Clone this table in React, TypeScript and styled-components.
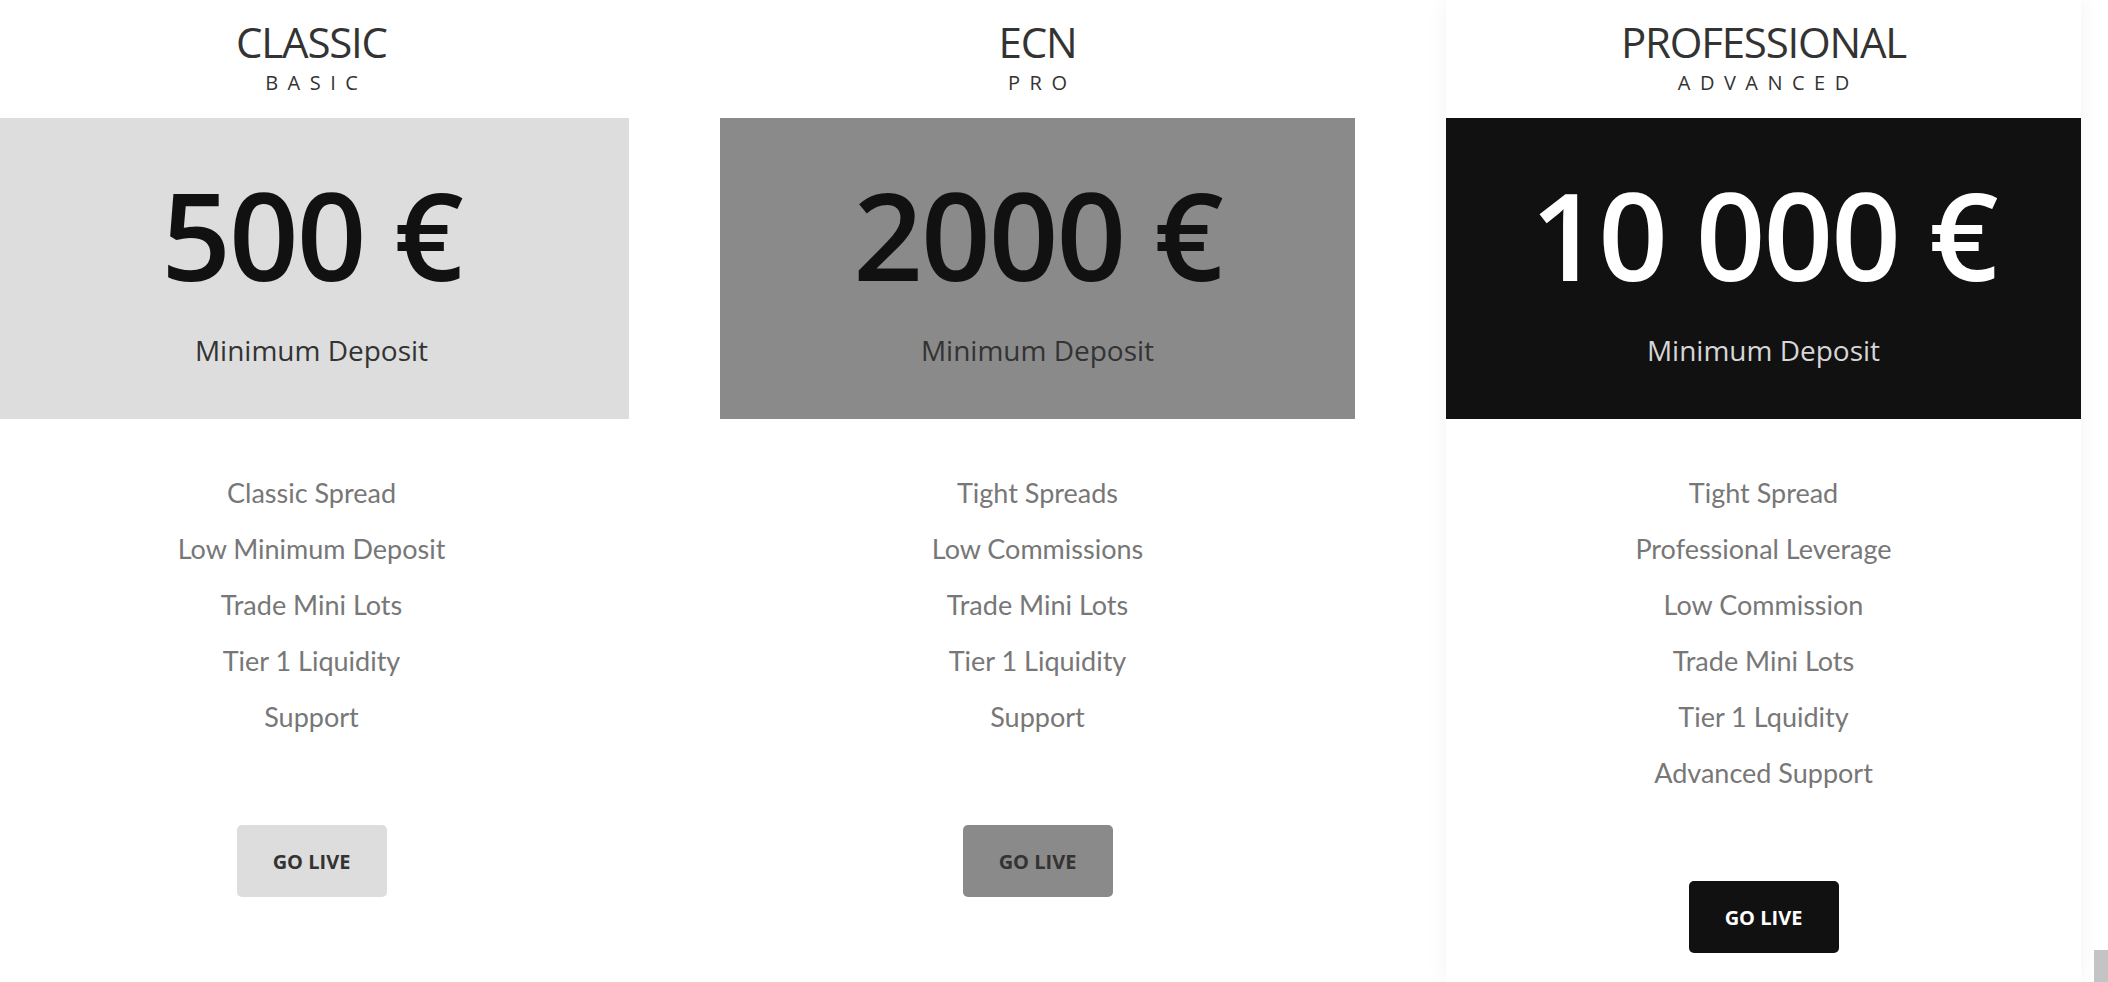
import React from 'react';
import styled, {createGlobalStyle} from 'styled-components';

const GlobalStyle = createGlobalStyle`
  html, body {
    margin: 0;
    padding: 0;
    background: #ffffff;
  }
  body {
    font-family: 'Open Sans', 'Liberation Sans', sans-serif;
    overflow: hidden;
  }
`;

type Tone = 'light' | 'mid' | 'dark';

const palette: Record<Tone, {bg: string; price: string; label: string; btnText: string}> = {
  light: {bg: '#dddddd', price: '#111111', label: '#333333', btnText: '#333333'},
  mid: {bg: '#8a8a8a', price: '#111111', label: '#333333', btnText: '#333333'},
  dark: {bg: '#111111', price: '#ffffff', label: '#d6d6d6', btnText: '#ffffff'},
};

const Page = styled.div`
  position: relative;
  height: 982px;
  margin-left: -6px;
  display: grid;
  grid-template-columns: repeat(3, 635px);
  column-gap: 91px;
  align-items: stretch;
`;

const Card = styled.section<{$featured?: boolean}>`
  display: flex;
  flex-direction: column;
  align-items: center;
  background: #ffffff;
  box-shadow: ${p => (p.$featured ? '0 0 22px rgba(0, 0, 0, 0.05)' : 'none')};
`;

const Header = styled.header`
  height: 118px;
  display: flex;
  flex-direction: column;
  align-items: center;
  padding-top: 16px;
  box-sizing: border-box;
`;

const Title = styled.h2`
  margin: 0;
  font-family: 'Open Sans', 'Liberation Sans', sans-serif;
  font-weight: 500;
  font-size: 42px;
  line-height: 52px;
  letter-spacing: -1.2px;
  color: #333333;
`;

const Subtitle = styled.div`
  margin-top: 2px;
  font-family: 'Open Sans', 'Liberation Sans', sans-serif;
  font-size: 20px;
  line-height: 26px;
  letter-spacing: 9.5px;
  padding-left: 9.5px;
  color: #333333;
`;

const PriceBox = styled.div<{$tone: Tone}>`
  align-self: stretch;
  height: 301px;
  background: ${p => palette[p.$tone].bg};
  display: flex;
  flex-direction: column;
  align-items: center;
  padding-top: 28px;
  box-sizing: border-box;
`;

const Price = styled.div<{$tone: Tone}>`
  font-family: 'Open Sans', 'Liberation Sans', sans-serif;
  font-weight: 600;
  font-size: 122px;
  line-height: 176px;
  letter-spacing: -2px;
  color: ${p => palette[p.$tone].price};
`;

const PriceLabel = styled.div<{$tone: Tone}>`
  margin-top: 8px;
  font-family: 'Open Sans', 'Liberation Sans', sans-serif;
  font-size: 28px;
  line-height: 40px;
  color: ${p => palette[p.$tone].label};
`;

const Features = styled.ul`
  list-style: none;
  margin: 46px 0 0;
  padding: 0;
  text-align: center;
`;

const Feature = styled.li`
  font-family: Lato, 'Open Sans', sans-serif;
  font-size: 27px;
  line-height: 56px;
  color: #777777;
`;

const GoLive = styled.button<{$tone: Tone}>`
  margin-top: 80px;
  width: 150px;
  height: 72px;
  border: none;
  border-radius: 5px;
  background: ${p => palette[p.$tone].bg};
  color: ${p => palette[p.$tone].btnText};
  font-family: 'Open Sans', 'Liberation Sans', sans-serif;
  font-weight: 700;
  font-size: 20px;
  cursor: pointer;
`;

const ScrollThumb = styled.div`
  position: absolute;
  right: 0;
  bottom: 0;
  width: 14px;
  height: 32px;
  background: #c4c4c4;
`;

const plans: {title: string; tier: string; price: string; tone: Tone; features: string[]}[] = [
  {
    title: 'CLASSIC',
    tier: 'BASIC',
    price: '500 €',
    tone: 'light',
    features: ['Classic Spread', 'Low Minimum Deposit', 'Trade Mini Lots', 'Tier 1 Liquidity', 'Support'],
  },
  {
    title: 'ECN',
    tier: 'PRO',
    price: '2000 €',
    tone: 'mid',
    features: ['Tight Spreads', 'Low Commissions', 'Trade Mini Lots', 'Tier 1 Liquidity', 'Support'],
  },
  {
    title: 'PROFESSIONAL',
    tier: 'ADVANCED',
    price: '10 000 €',
    tone: 'dark',
    features: [
      'Tight Spread',
      'Professional Leverage',
      'Low Commission',
      'Trade Mini Lots',
      'Tier 1 Lquidity',
      'Advanced Support',
    ],
  },
];

function App() {
  return (
    <>
      <GlobalStyle />
      <Page>
        {plans.map(plan => (
          <Card key={plan.title} $featured={plan.tone === 'dark'}>
            <Header>
              <Title>{plan.title}</Title>
              <Subtitle>{plan.tier}</Subtitle>
            </Header>
            <PriceBox $tone={plan.tone}>
              <Price $tone={plan.tone}>{plan.price}</Price>
              <PriceLabel $tone={plan.tone}>Minimum Deposit</PriceLabel>
            </PriceBox>
            <Features>
              {plan.features.map(f => (
                <Feature key={f}>{f}</Feature>
              ))}
            </Features>
            <GoLive $tone={plan.tone}>GO LIVE</GoLive>
          </Card>
        ))}
        <ScrollThumb />
      </Page>
    </>
  );
}

export default App;
